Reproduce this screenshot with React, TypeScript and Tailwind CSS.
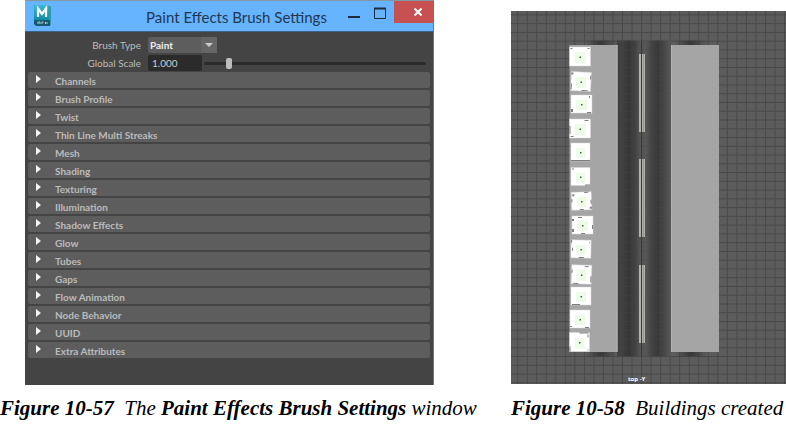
import { useState } from "react";

const SECTIONS = [
  'Channels',
  'Brush Profile',
  'Twist',
  'Thin Line Multi Streaks',
  'Mesh',
  'Shading',
  'Texturing',
  'Illumination',
  'Shadow Effects',
  'Glow',
  'Tubes',
  'Gaps',
  'Flow Animation',
  'Node Behavior',
  'UUID',
  'Extra Attributes',
];

// Buildings seen from above: top-left corner, size, tilt and roof debris marks
const BUILDINGS = [
  { x: 58.5, y: 36, w: 21, h: 19, tilt: 0, marks: [[1, 1, 2, 1], [18, 1, 2, 1]] },
  { x: 60, y: 61, w: 20, h: 19, tilt: 3, marks: [[0, 12, 1, 6], [11, 18, 6, 1], [19, 3, 1, 4], [0, 1, 2, 2]] },
  { x: 60, y: 84, w: 21, h: 18, tilt: 0, marks: [[0, 14, 2, 3], [16, 17, 4, 1], [18, 1, 1, 2]] },
  { x: 58.5, y: 108, w: 21, h: 19, tilt: 0, marks: [[0, 7, 1, 8], [1, 17, 3, 1], [15, 1, 4, 1]] },
  { x: 60, y: 132, w: 19, h: 18, tilt: 0, marks: [[0, 17, 19, 1]] },
  { x: 60, y: 156.5, w: 19, h: 18, tilt: 0, marks: [[14, 17, 5, 1], [1, 1, 2, 1]] },
  { x: 60.5, y: 181, w: 20, h: 18, tilt: -2, marks: [[1, 2, 2, 2], [8, 17, 4, 1], [19, 8, 1, 4], [0, 7, 1, 3], [13, 0, 4, 1], [18, 15, 2, 2]] },
  { x: 61, y: 205, w: 21, h: 18, tilt: 0, marks: [[0, 3, 2, 2], [0, 13, 2, 3], [9, 17, 4, 1], [6, 1, 4, 1], [20, 9, 1, 4]] },
  { x: 60, y: 229, w: 20, h: 18, tilt: 1, marks: [[0, 0, 1, 3], [8, 17, 5, 1], [1, 8, 1, 3], [18, 2, 1, 1]] },
  { x: 60.5, y: 254, w: 20, h: 19, tilt: 2, marks: [[0, 5, 1, 3], [2, 18, 5, 1], [19, 11, 1, 6], [13, 1, 4, 1]] },
  { x: 60, y: 276, w: 20, h: 18, tilt: 0, marks: [[1, 17, 8, 1]] },
  { x: 59, y: 299, w: 20, h: 18, tilt: 0, marks: [[15, 17, 4, 1], [0, 16, 2, 1]] },
  { x: 58.5, y: 321.5, w: 20, h: 19, tilt: 0, marks: [[0, 14, 1, 5], [10, 0, 9, 1], [18, 17, 1, 1], [18, 2, 1, 3]] },
];

const LANE_MARKS = [43, 148, 254];

function MayaLogo() {
  return (
    <svg className="w-[18px] h-[22px]" viewBox="0 0 18 22" aria-hidden="true">
      <defs>
        <linearGradient id="maya" x1="0" y1="0" x2="0" y2="1">
          <stop offset="0" stopColor="#3db9d0" />
          <stop offset="1" stopColor="#0f8ba3" />
        </linearGradient>
      </defs>
      <path d="M1 0h14l3 2v13H1z" fill="url(#maya)" />
      <path d="M15.500 .5l2.500 1.500v18h-2.500z" fill="#2a9bb0" />
      <path d="M1 15h16v6H3l-2-2z" fill="#185b6e" />
      <path d="M5 12V3.500L9 9l4-5.500V12" fill="none" stroke="#fff" strokeWidth="2.200" />
      <path d="M5 19v-2h2v2M9 19v-2h1.500M12.500 19v-2M14 17v2" fill="none" stroke="#a9cbd2" strokeWidth="1" />
    </svg>
  );
}

function BrushSettingsWindow() {
  const [brushType, setBrushType] = useState('Paint');
  const [scale, setScale] = useState(1);
  const [open, setOpen] = useState<string | null>(null);

  return (
    <div className="bg-[#444444] border-t border-t-[#8796a5] border-r border-r-[#2f86cc] pb-[27px] font-[Lato,'Noto_Sans',sans-serif]">
      {/* title bar */}
      <div className="flex items-start h-[31px] bg-[#66b3ff] border-b border-[#3b6288]">
        <div className="w-[108px] pl-2 pt-1">
          <MayaLogo />
        </div>
        <h1 className="flex-1 pt-1 text-center text-[15px] leading-6 text-[#22384f] whitespace-nowrap">
          Paint Effects Brush Settings
        </h1>
        <div className="flex">
          <button type="button" aria-label="Minimize" className="w-7 h-6 flex items-center justify-center">
            <svg className="w-3 h-3" viewBox="0 0 12 12"><path d="M0 10h12" stroke="#1c2c3c" strokeWidth="2" /></svg>
          </button>
          <button type="button" aria-label="Maximize" className="w-6 h-6 flex items-center justify-center">
            <svg className="w-3 h-3" viewBox="0 0 12 12"><path d="M.5 1v10.500h11V1" fill="none" stroke="#1c2c3c" /><path d="M0 1.500h12" stroke="#1c2c3c" strokeWidth="2" /></svg>
          </button>
          <button type="button" aria-label="Close" className="ml-[2px] pl-2 w-[39px] h-[22px] bg-[#c75050] flex items-center justify-center">
            <svg className="w-2 h-2" viewBox="0 0 8 8"><path d="M.5 .5l7 7M7.500 .5l-7 7" stroke="#fff" strokeWidth="2" /></svg>
          </button>
        </div>
      </div>

      {/* brush controls */}
      <div className="grid grid-cols-[116px_1fr] gap-x-[7px] gap-y-[2px] pt-[5px] pr-[7px] pb-px text-[10px] leading-4 text-[#bbbbbb]">
        <label htmlFor="brush-type" className="text-right">Brush Type</label>
        <div className="relative w-[69px] h-4">
          <select
            id="brush-type"
            value={brushType}
            onChange={(e) => setBrushType(e.target.value)}
            className="appearance-none block w-full h-4 pl-[2px] rounded-xs bg-[#5d5d5d] text-[#eeeeee] font-bold"
          >
            <option>Paint</option>
            <option>Smear</option>
            <option>Blur</option>
            <option>Erase</option>
          </select>
          <span className="absolute right-0 top-0 w-4 h-4 bg-[#666666] flex items-center justify-center pointer-events-none">
            <svg className="w-2 h-1" viewBox="0 0 8 4"><path d="M0 0h8L4 4z" fill="#cccccc" /></svg>
          </span>
        </div>
        <label htmlFor="global-scale" className="text-right">Global Scale</label>
        <div className="flex items-center gap-[2px]">
          <input
            id="global-scale"
            type="text"
            value={scale.toFixed(3)}
            onChange={(e) => setScale(Number(e.target.value) || 0)}
            className="w-[54px] h-4 pl-1 rounded-xs bg-[#2b2b2b] text-[#cccccc]"
          />
          <input
            type="range"
            aria-label="Global Scale"
            min={0}
            max={10}
            step={0.01}
            value={scale}
            onChange={(e) => setScale(Number(e.target.value))}
            className="appearance-none flex-1 min-w-0 h-4 bg-transparent [&::-webkit-slider-runnable-track]:h-[3px] [&::-webkit-slider-runnable-track]:rounded-full [&::-webkit-slider-runnable-track]:bg-[#2b2b2b] [&::-webkit-slider-thumb]:appearance-none [&::-webkit-slider-thumb]:-mt-1 [&::-webkit-slider-thumb]:w-[6px] [&::-webkit-slider-thumb]:h-[11px] [&::-webkit-slider-thumb]:rounded-xs [&::-webkit-slider-thumb]:bg-[#bdbdbd]"
          />
        </div>
      </div>

      {/* collapsible sections */}
      <div className="flex flex-col gap-[2px] px-[3px]">
        {SECTIONS.map(section => (
          <button
            key={section}
            type="button"
            aria-expanded={open === section}
            onClick={() => setOpen(open === section ? null : section)}
            className="flex items-start gap-[14px] h-4 pl-2 rounded-xs bg-[#5d5d5d] text-left text-[10px] leading-4 font-bold text-[#bbbbbb]"
          >
            <svg className="w-[5px] h-2 mt-[3px]" viewBox="0 0 5 8"><path d="M0 0l5 4-5 4z" fill="#f5f5f5" /></svg>
            <span className="pt-px">{section}</span>
          </button>
        ))}
      </div>
    </div>
  );
}

function TopView() {
  return (
    <svg className="block w-full" viewBox="0 0 275 373" role="img" aria-label="Top view of the street">
      <defs>
        <pattern id="grid" x="6.200" y="3.400" width="9.530" height="8.760" patternUnits="userSpaceOnUse">
          <path d="M.5 0v8.760M0 .5h9.530" stroke="#484848" fill="none" />
        </pattern>
        <linearGradient id="road">
          <stop offset="0" stopColor="#3f3f3f" />
          <stop offset=".08" stopColor="#414141" />
          <stop offset=".22" stopColor="#363636" />
          <stop offset=".34" stopColor="#424242" />
          <stop offset=".42" stopColor="#545454" />
          <stop offset=".54" stopColor="#565656" />
          <stop offset=".64" stopColor="#434343" />
          <stop offset=".76" stopColor="#393939" />
          <stop offset=".86" stopColor="#454545" />
          <stop offset="1" stopColor="#5a5a5a" />
        </linearGradient>
        <linearGradient id="shade">
          <stop offset="0" stopColor="#383838" stopOpacity="0" />
          <stop offset=".5" stopColor="#383838" />
          <stop offset="1" stopColor="#383838" stopOpacity="0" />
        </linearGradient>
      </defs>
      <rect width="275" height="373" fill="#5c5c5c" />
      <rect width="275" height="373" fill="url(#grid)" />

      {/* road */}
      <rect x="74" y="29.500" width="32" height="316" fill="url(#shade)" />
      <rect x="164" y="29.500" width="32" height="316" fill="url(#shade)" />
      <rect x="106" y="29.500" width="54" height="316" fill="url(#road)" />
      <rect x="106" y="29.500" width="54" height="316" fill="url(#grid)" opacity=".3" />
      <path d="M130.500 29.500v316" stroke="#393939" />
      {LANE_MARKS.map(y => (
        <g key={y}>
          <rect x="128" y={y} width="2" height="78" fill="#aeb2aa" />
          <rect x="131" y={y} width="3" height="78" fill="#aeb2aa" />
          <path d={`M132.500 ${y}v78`} stroke="#929690" />
        </g>
      ))}

      {/* pavements */}
      <rect x="58.500" y="34" width="48" height="307" fill="#a5a5a5" />
      <rect x="160" y="34" width="48" height="307" fill="#a5a5a5" />
      <path d="M160.500 34v307M106 34v307" stroke="#b3b3b3" />

      {BUILDINGS.map(b => (
        <g key={b.y} transform={`translate(${b.x} ${b.y}) rotate(${b.tilt} ${b.w / 2} ${b.h / 2})`}>
          <rect width={b.w} height={b.h} fill="#ffffff" stroke="#d6d6d6" strokeWidth=".5" />
          <rect x="5" y="5" width={b.w - 10} height={b.h - 8} fill="#effbe9" />
          <rect x={b.w / 2 - 0.5} y={b.h / 2} width="1.500" height="1.500" fill="#3c6431" />
          {b.marks.map(([x, y, w, h], i) => (
            <rect key={i} x={x} y={y} width={w} height={h} fill="#555555" opacity=".75" />
          ))}
        </g>
      ))}

      <text x="117" y="370" className="font-['Open_Sans',sans-serif] text-[6px] font-bold" fill="#ffffff">top -Y</text>
    </svg>
  );
}

export default function App() {
  return (
    <main className="bg-white grid grid-cols-[511fr_275fr] font-['Liberation_Serif',serif] text-black">
      <figure className="min-w-0">
        <div className="pl-[25px] pr-[77px]">
          <BrushSettingsWindow />
        </div>
        <figcaption className="pt-[11px] text-[21px] leading-6 italic whitespace-nowrap">
          <b>Figure 10-57</b>&nbsp; The <b>Paint Effects Brush Settings</b> window
        </figcaption>
      </figure>
      <figure className="min-w-0 pt-[11px]">
        <TopView />
        <figcaption className="pt-[12px] text-[21px] leading-6 italic whitespace-nowrap">
          <b>Figure 10-58</b>&nbsp; Buildings created
        </figcaption>
      </figure>
    </main>
  );
}
